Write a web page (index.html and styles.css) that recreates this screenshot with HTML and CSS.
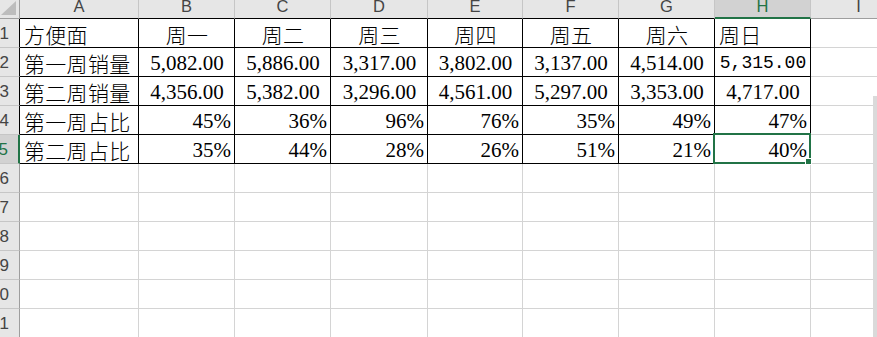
FILE: index.html
```html
<!DOCTYPE html>
<html lang="zh-CN">
<head>
    <meta charset="UTF-8">
    <title>方便面销量</title>
    <link rel="stylesheet" href="styles.css">
</head>
<body>
    <div class="sheet">
        <div class="row head">
            <div class="corner"></div>
            <div class="ch on-data">A</div>
            <div class="ch on-data">B</div>
            <div class="ch on-data">C</div>
            <div class="ch on-data">D</div>
            <div class="ch on-data">E</div>
            <div class="ch on-data">F</div>
            <div class="ch on-data">G</div>
            <div class="ch active">H</div>
            <div class="ch">I</div>
        </div>

        <div class="row">
            <div class="rh on-data">1</div>
            <div class="c d left"><span class="zh">方便面</span></div>
            <div class="c d"><span class="zh">周一</span></div>
            <div class="c d"><span class="zh">周二</span></div>
            <div class="c d"><span class="zh">周三</span></div>
            <div class="c d"><span class="zh">周四</span></div>
            <div class="c d"><span class="zh">周五</span></div>
            <div class="c d"><span class="zh">周六</span></div>
            <div class="c d left"><span class="zh">周日</span></div>
            <div class="c"></div>
        </div>
        <div class="row">
            <div class="rh on-data">2</div>
            <div class="c d left"><span class="zh">第一周销量</span></div>
            <div class="c d">5,082.00</div>
            <div class="c d">5,886.00</div>
            <div class="c d">3,317.00</div>
            <div class="c d">3,802.00</div>
            <div class="c d">3,137.00</div>
            <div class="c d">4,514.00</div>
            <div class="c d"><span class="song">5,315.00</span></div>
            <div class="c"></div>
        </div>
        <div class="row">
            <div class="rh on-data">3</div>
            <div class="c d left"><span class="zh">第二周销量</span></div>
            <div class="c d">4,356.00</div>
            <div class="c d">5,382.00</div>
            <div class="c d">3,296.00</div>
            <div class="c d">4,561.00</div>
            <div class="c d">5,297.00</div>
            <div class="c d">3,353.00</div>
            <div class="c d">4,717.00</div>
            <div class="c"></div>
        </div>
        <div class="row">
            <div class="rh on-data">4</div>
            <div class="c d left"><span class="zh">第一周占比</span></div>
            <div class="c d right">45%</div>
            <div class="c d right">36%</div>
            <div class="c d right">96%</div>
            <div class="c d right">76%</div>
            <div class="c d right">35%</div>
            <div class="c d right">49%</div>
            <div class="c d right">47%</div>
            <div class="c"></div>
        </div>
        <div class="row">
            <div class="rh active">5</div>
            <div class="c d left"><span class="zh">第二周占比</span></div>
            <div class="c d right">35%</div>
            <div class="c d right">44%</div>
            <div class="c d right">28%</div>
            <div class="c d right">26%</div>
            <div class="c d right">51%</div>
            <div class="c d right">21%</div>
            <div class="c d right selected">40%<div class="sel"></div></div>
            <div class="c"></div>
        </div>

        <div class="row"><div class="rh">6</div><div class="c"></div><div class="c"></div><div class="c"></div><div class="c"></div><div class="c"></div><div class="c"></div><div class="c"></div><div class="c"></div><div class="c"></div></div>
        <div class="row"><div class="rh">7</div><div class="c"></div><div class="c"></div><div class="c"></div><div class="c"></div><div class="c"></div><div class="c"></div><div class="c"></div><div class="c"></div><div class="c"></div></div>
        <div class="row"><div class="rh">8</div><div class="c"></div><div class="c"></div><div class="c"></div><div class="c"></div><div class="c"></div><div class="c"></div><div class="c"></div><div class="c"></div><div class="c"></div></div>
        <div class="row"><div class="rh">9</div><div class="c"></div><div class="c"></div><div class="c"></div><div class="c"></div><div class="c"></div><div class="c"></div><div class="c"></div><div class="c"></div><div class="c"></div></div>
        <div class="row"><div class="rh">10</div><div class="c"></div><div class="c"></div><div class="c"></div><div class="c"></div><div class="c"></div><div class="c"></div><div class="c"></div><div class="c"></div><div class="c"></div></div>
        <div class="row"><div class="rh">11</div><div class="c"></div><div class="c"></div><div class="c"></div><div class="c"></div><div class="c"></div><div class="c"></div><div class="c"></div><div class="c"></div><div class="c"></div></div>
    </div>

    <div class="vscroll"></div>
</body>
</html>
```

FILE: styles.css
```css
html, body {
    margin: 0;
    overflow: hidden;
    background: #fff;
}
body {
    position: relative;
    height: 337px;
}
.sheet {
    margin-left: -11px;
    width: 1014px;
}
.row {
    display: grid;
    grid-template-columns: 31px 119px 96px 96px 97px 95px 96px 96px 96px 96px;
    height: 29px;
}
.row.head {
    height: 19px;
}
.row > div {
    box-sizing: border-box;
    display: flex;
    border-right: 1px solid #d4d4d4;
    border-bottom: 1px solid #d4d4d4;
}

/* headers */
.corner, .ch, .rh {
    background: #e6e6e6;
    color: #444;
    font-family: "Liberation Sans", Arial, sans-serif;
    font-size: 16.5px;
}
.corner {
    position: relative;
    border-right-color: #9e9e9e !important;
    border-bottom-color: #9e9e9e !important;
}
.corner::after {
    content: "";
    position: absolute;
    right: 3px;
    bottom: 3px;
    width: 15px;
    height: 14px;
    background: #bdbdbd;
    clip-path: polygon(100% 0, 100% 100%, 0 100%);
}
.ch {
    justify-content: center;
    align-items: flex-start;
    line-height: 12px;
    border-right-color: #c6c6c6 !important;
    border-bottom-color: #9e9e9e !important;
}
.ch.on-data {
    border-bottom-color: #000 !important;
}
.rh {
    justify-content: flex-end;
    align-items: center;
    padding-right: 10px;
    font-size: 17px;
    line-height: 17px;
    border-right-color: #9e9e9e !important;
    border-bottom-color: #c6c6c6 !important;
}
.rh.on-data {
    border-right-color: #000 !important;
}
.ch.active, .rh.active {
    background: #d2d2d2;
    color: #217346;
}
.ch.active {
    border-bottom: 2px solid #217346 !important;
}
.rh.active {
    border-right: 2px solid #217346 !important;
}

/* cells */
.c {
    justify-content: center;
    align-items: flex-end;
    padding: 0 3px 0 4px;
    font-family: "Liberation Serif", "Noto Sans CJK SC", serif;
    font-size: 21px;
    line-height: 26px;
    color: #000;
    white-space: nowrap;
}
.c.d {
    border-right-color: #000;
    border-bottom-color: #000;
}
.c.left {
    justify-content: flex-start;
}
.c.right {
    justify-content: flex-end;
}
.zh {
    font-family: "Noto Sans CJK SC", sans-serif;
    font-weight: 300;
    letter-spacing: 0.3px;
}
.song {
    font-family: "Liberation Mono", monospace;
    font-size: 18px;
}

/* active cell */
.selected {
    position: relative;
}
.sel {
    position: absolute;
    left: -2px;
    top: -2px;
    right: -1px;
    bottom: -1px;
    border: 2px solid #217346;
}
.sel::after {
    content: "";
    position: absolute;
    right: -3px;
    bottom: -3px;
    width: 5px;
    height: 5px;
    background: #217346;
    border: 1px solid #fff;
}

.vscroll {
    position: absolute;
    right: 0;
    top: 96px;
    bottom: 0;
    width: 4px;
    background: #dadada;
}
```
